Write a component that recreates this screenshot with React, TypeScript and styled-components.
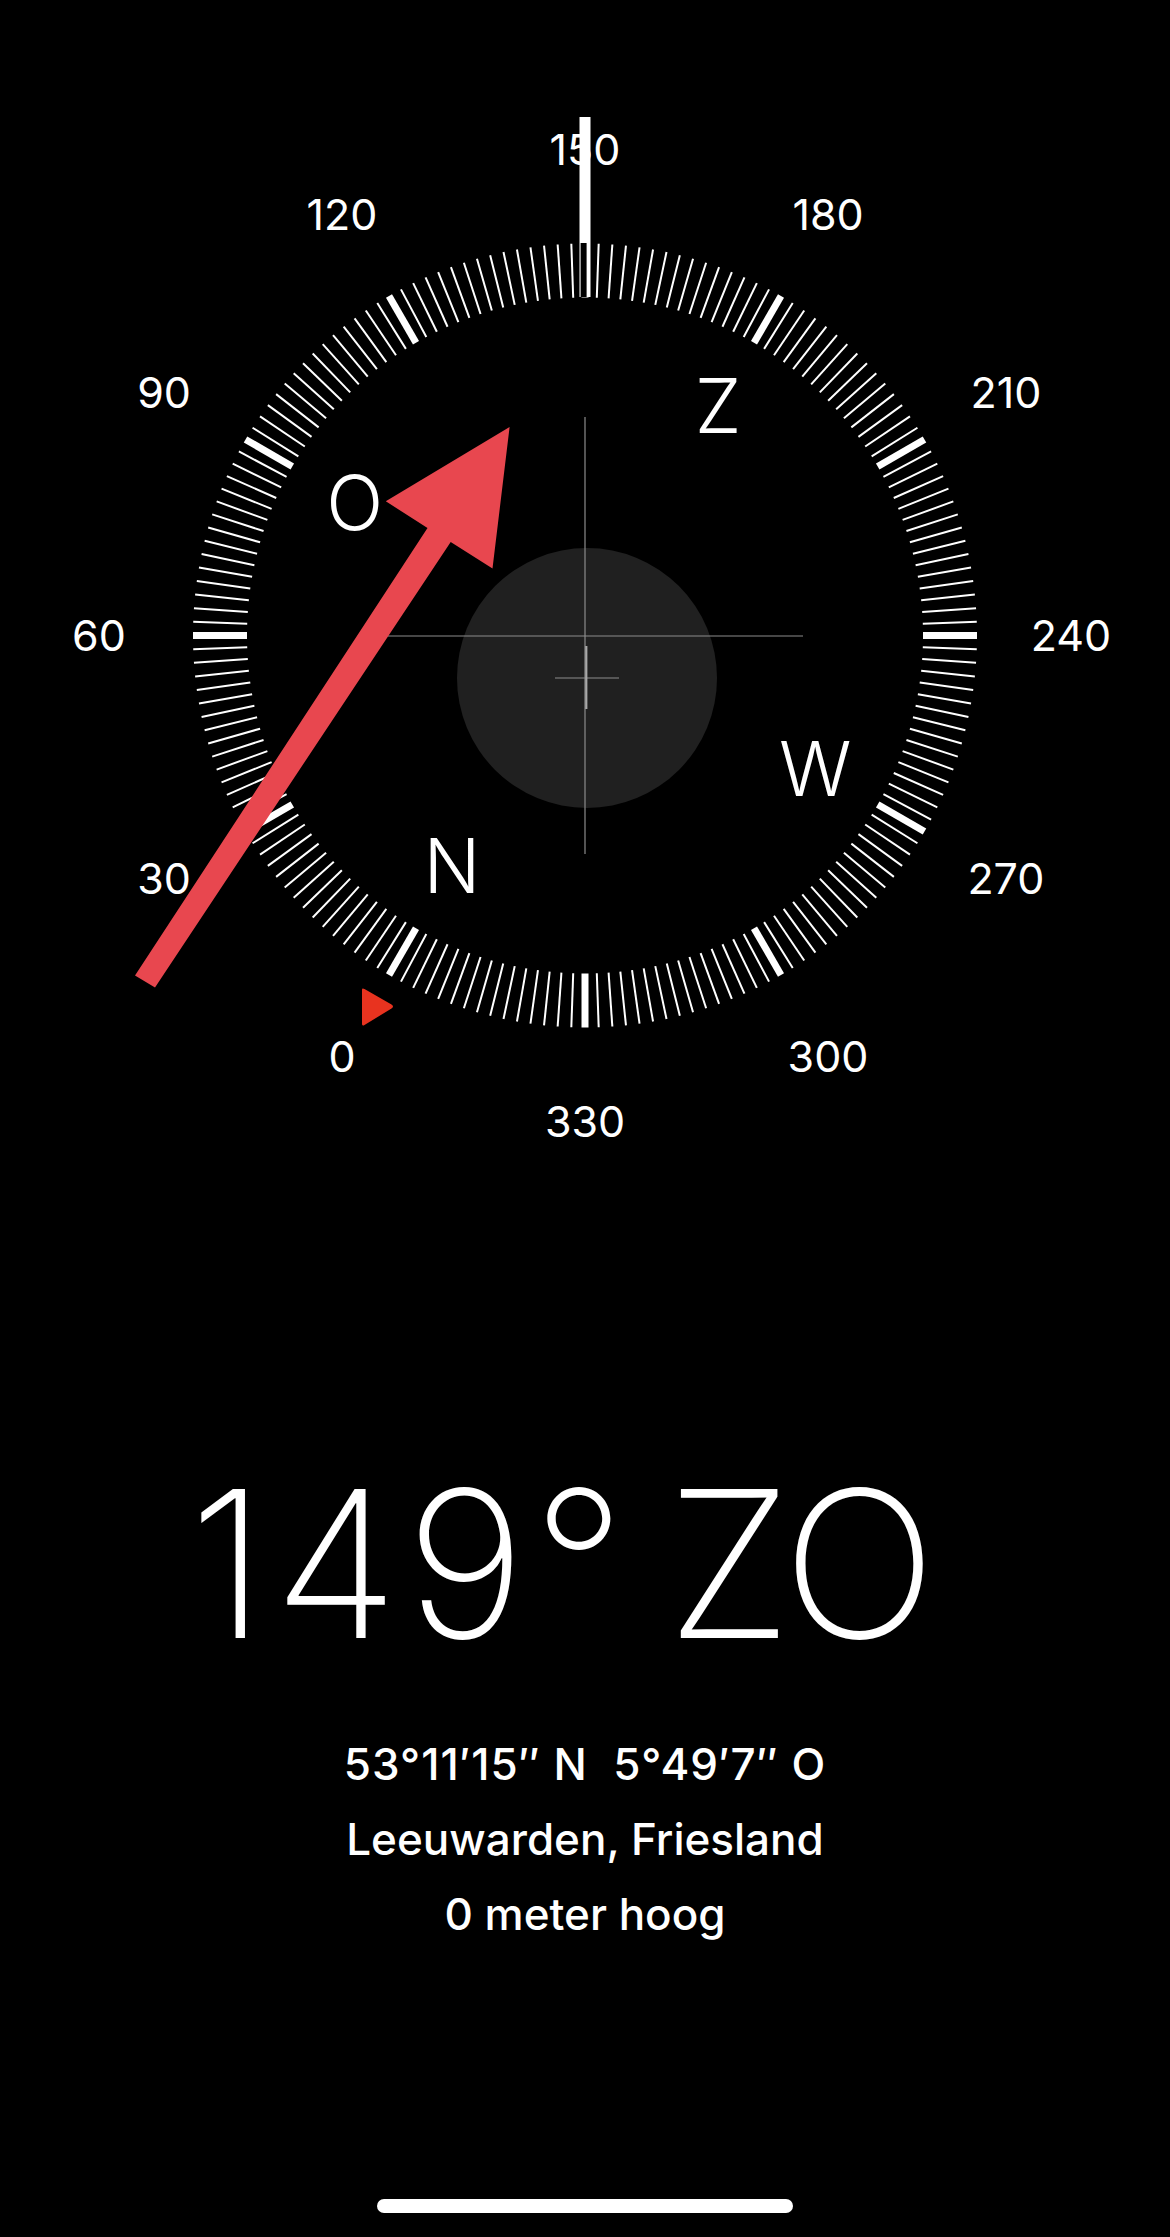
import React from "react";
import styled, { createGlobalStyle } from "styled-components";

const GlobalStyle = createGlobalStyle`
  html, body {
    margin: 0;
    padding: 0;
    background: #000;
  }
  #root {
    background: #000;
  }
`;

const CX = 585;
const CY = 635.5;
const HEADING_DIAL = 150;

const polar = (r: number, deg: number): [number, number] => {
  const a = (deg * Math.PI) / 180;
  return [CX + r * Math.sin(a), CY - r * Math.cos(a)];
};

const Page = styled.div`
  width: 1170px;
  min-height: 2237px;
  display: flex;
  flex-direction: column;
  align-items: center;
  background: #000;
  color: #fff;
  font-family: Inter, "Liberation Sans", sans-serif;
`;

const CompassArea = styled.div`
  width: 1170px;
  height: 1200px;
  flex: none;
`;

const DialSvg = styled.svg`
  display: block;
  width: 1170px;
  height: 1200px;
`;

const DialNumber = styled.text`
  font-family: Inter, "Liberation Sans", sans-serif;
  font-size: 43px;
  font-weight: 400;
  fill: #fff;
  text-anchor: middle;
`;

const Cardinal = styled.text`
  font-family: Inter, "Liberation Sans", sans-serif;
  font-size: 75px;
  font-weight: 350;
  fill: #fff;
  text-anchor: middle;
`;

const Heading = styled.div`
  margin-top: 261px;
  margin-right: 48px;
  font-size: 205px;
  line-height: 205px;
  font-weight: 200;
  white-space: nowrap;
  word-spacing: -24px;
`;

const Degrees = styled.span`
  letter-spacing: 7px;
`;

const Direction = styled.span`
  letter-spacing: -3px;
`;

const Details = styled.div`
  margin-top: 61px;
  display: flex;
  flex-direction: column;
  align-items: center;
`;

const DetailLine = styled.div<{ $wide?: boolean }>`
  font-size: 44px;
  line-height: 75px;
  font-weight: 500;
  white-space: pre;
  letter-spacing: ${(p) => (p.$wide ? "1px" : "0")};
`;

const HomeBar = styled.div`
  margin-top: auto;
  margin-bottom: 24px;
  width: 416px;
  height: 14px;
  border-radius: 7px;
  background: #fff;
`;

const Ticks: React.FC = () => {
  const items = [];
  for (let d = 0; d < 360; d += 2) {
    const major = d % 30 === 0;
    const a = d - HEADING_DIAL;
    const [x1, y1] = polar(338, a);
    const [x2, y2] = polar(392, a);
    items.push(
      <line
        key={d}
        x1={x1}
        y1={y1}
        x2={x2}
        y2={y2}
        stroke="#fff"
        strokeWidth={major ? 7 : 2}
      />
    );
  }
  return <g>{items}</g>;
};

const Numbers: React.FC = () => (
  <g>
    {Array.from({ length: 12 }, (_, i) => i * 30).map((d) => {
      const [x, y] = polar(486, d - HEADING_DIAL);
      return (
        <DialNumber key={d} x={x} y={y + 15.5}>
          {d}
        </DialNumber>
      );
    })}
  </g>
);

const cardinals: [number, string][] = [
  [0, "N"],
  [90, "O"],
  [180, "Z"],
  [270, "W"],
];

const Cardinals: React.FC = () => (
  <g>
    {cardinals.map(([d, l]) => {
      const [x, y] = polar(266, d - HEADING_DIAL);
      return (
        <Cardinal key={l} x={x} y={y + 27.5}>
          {l}
        </Cardinal>
      );
    })}
  </g>
);

const Compass: React.FC = () => (
  <CompassArea>
    <DialSvg viewBox="0 0 1170 1200" xmlns="http://www.w3.org/2000/svg">
      <Ticks />
      <Numbers />
      <Cardinals />
      {/* heading needle */}
      <rect x={579.5} y={117} width={11} height={180} fill="#fff" />
      <rect x={580.6} y={243} width={6} height={54} fill="#000" />
      {/* bubble level */}
      <circle cx={587} cy={678} r={130} fill="#202020" />
      {/* crosshair */}
      <line x1={585} y1={417} x2={585} y2={854} stroke="#8c8c8c" strokeWidth={1.2} />
      <line x1={388} y1={636} x2={803} y2={636} stroke="#8c8c8c" strokeWidth={1.2} />
      <line x1={555} y1={678} x2={619} y2={678} stroke="#8c8c8c" strokeWidth={1.2} />
      <line x1={586.3} y1={646} x2={586.3} y2={709} stroke="#a8a8a8" strokeWidth={2.2} />
      {/* north marker */}
      <path
        d="M362 990.5 Q361.7 987.5 364.5 989 L391.5 1004.5 Q394.5 1006.5 391.5 1008.5 L364.5 1025 Q361.7 1026.5 362 1023.5 Z"
        fill="#e8331f"
      />
      {/* annotation arrow */}
      <polygon
        points="135,975.5 427.5,528 385.8,501.3 509.6,427 492.5,568.6 450.7,542 155,987.4"
        fill="#e8474f"
      />
    </DialSvg>
  </CompassArea>
);

export default function App() {
  return (
    <>
      <GlobalStyle />
      <Page>
        <Compass />
        <Heading>
          <Degrees>149°</Degrees> <Direction>ZO</Direction>
        </Heading>
        <Details>
          <DetailLine $wide>{"53°11′15″ N  5°49′7″ O"}</DetailLine>
          <DetailLine>Leeuwarden, Friesland</DetailLine>
          <DetailLine>0 meter hoog</DetailLine>
        </Details>
        <HomeBar />
      </Page>
    </>
  );
}
